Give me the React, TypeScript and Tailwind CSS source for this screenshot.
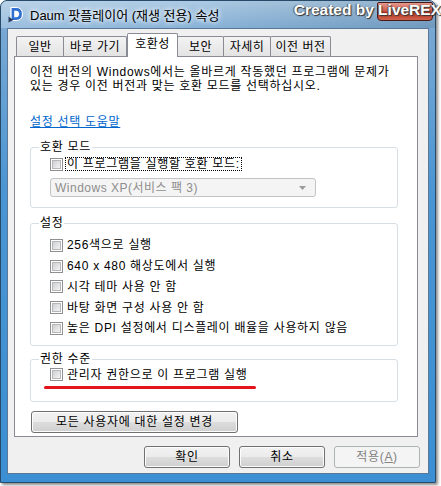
import React from "react";

const font = "font-[family-name:'Liberation_Sans','Noto_Sans_CJK_KR',sans-serif]";

const tabs = [
  { label: "일반", w: "w-[48px]" },
  { label: "바로 가기", w: "w-[64px]" },
  { label: "호환성", w: "w-[51px]", active: true },
  { label: "보안", w: "w-[47px]" },
  { label: "자세히", w: "w-[48px]" },
  { label: "이전 버전", w: "w-[61px]" },
];

const settings = [
  "256색으로 실행",
  "640 x 480 해상도에서 실행",
  "시각 테마 사용 안 함",
  "바탕 화면 구성 사용 안 함",
  "높은 DPI 설정에서 디스플레이 배율을 사용하지 않음",
];

const CheckBox = () => (
  <span className="flex w-[13px] h-[13px] shrink-0 border border-[#8e8f8f] bg-white p-[1px]">
    <span className="block w-full h-full border border-[#b5b7ba] bg-[linear-gradient(135deg,#cfd0d2,#f3f3f3)]" />
  </span>
);

const Group = ({ title, children, className }: { title: string; children: React.ReactNode; className?: string }) => (
  <fieldset className={`border border-[#d5dfe5] rounded-[3px] w-[368px] ${className ?? ""}`}>
    <legend className="ml-[8px] px-[1px] h-[13px] leading-[13px]">{title}</legend>
    {children}
  </fieldset>
);

const Button = ({ children, className }: { children: React.ReactNode; className?: string }) => (
  <div
    className={`flex items-center justify-center h-[22px] rounded-[3px] border border-[#707070] bg-[linear-gradient(#f2f2f2_0%,#ebebeb_50%,#dddddd_51%,#cfcfcf_100%)] shadow-[inset_0_0_0_1px_#fcfcfc] ${className ?? ""}`}
  >
    {children}
  </div>
);

const App = () => {
  return (
    <div className={`w-[441px] h-[486px] bg-white overflow-hidden ${font} text-[12px] leading-[12px] tracking-[0.7px] text-black`}>
      <div className="relative w-[436px] h-[483px] rounded-t-[7px] border border-[#274a6b] bg-[linear-gradient(180deg,#a3c4e0_0%,#78a8d3_6%,#4a95d3_40%,#3b8fd2_100%)] shadow-[2px_2px_3px_rgba(0,0,0,0.45)] flex flex-col">
        {/* title bar */}
        <div className="h-[27px] flex items-start bg-[linear-gradient(90deg,rgba(255,255,255,0.25),rgba(255,255,255,0.1)_45%,rgba(0,0,0,0.1))] rounded-t-[6px]">
          <svg width="16" height="17" viewBox="0 0 16 17" className="mt-[5px] ml-[7px]">
            <path d="M3 1.5h5.2c3.8 0 6.3 2.8 6.3 6.5s-2.5 6.5-6.3 6.5H3z" fill="#2f6fd0" stroke="#ffffff" strokeWidth="1.2" />
            <path d="M6.2 4.8h2c1.9 0 3 1.3 3 3.2s-1.1 3.2-3 3.2h-2z" fill="#ffffff" />
            <path d="M0.5 10.5l5 3.5-5 2.6z" fill="#2a3f62" />
          </svg>
          <span className="mt-[8px] ml-[6px] text-[13px] leading-[13px] tracking-[0px] text-black [text-shadow:0_0_6px_#fff,0_0_4px_#fff]">
            Daum 팟플레이어 (재생 전용) 속성
          </span>
          <div className="ml-auto mr-[2px] mt-[1px] w-[56px] h-[19px] rounded-b-[4px] rounded-t-[2px] border border-[#4a1a17] bg-[linear-gradient(#e59a8f_0%,#cf5a4a_45%,#b5301e_55%,#d0654f_100%)]" />
          <span className="absolute right-[-6px] top-[0px] font-bold tracking-normal text-[15.5px] leading-[18px] text-white [text-shadow:1px_1px_1px_#333,-1px_0_1px_#555]">
            Created by LiveREX
          </span>
        </div>

        {/* client area */}
        <div className="mx-[6px] w-[422px] h-[446px] border border-[#5b7897] bg-[#f0f0f0] flex flex-col">
          {/* tabs */}
          <div className="flex items-end pl-[8px] pt-[4px] relative z-10 tracking-[0.5px]">
            {tabs.map((t) =>
              t.active ? (
                <div
                  key={t.label}
                  className={`${t.w} h-[24px] -mb-px border border-b-0 border-[#898c95] bg-white flex justify-center pt-[4px] rounded-t-[2px]`}
                >
                  {t.label}
                </div>
              ) : (
                <div
                  key={t.label}
                  className={`${t.w} h-[20px] -ml-px first:ml-0 border border-b-0 border-[#898c95] bg-[linear-gradient(#f3f3f3,#e3e3e3)] flex justify-center pt-[4px] rounded-t-[2px]`}
                >
                  {t.label}
                </div>
              )
            )}
          </div>

          {/* panel */}
          <div className="ml-[6px] w-[404px] h-[381px] border border-[#898c95] bg-white pl-[15px] pt-[9px] flex flex-col">
            <p className="whitespace-nowrap leading-[13.5px]">
              이전 버전의 Windows에서는 올바르게 작동했던 프로그램에 문제가
              <br />
              있는 경우 이전 버전과 맞는 호환 모드를 선택하십시오.
            </p>
            <a className="mt-[23px] self-start text-[#0066cc] underline leading-[12px]">설정 선택 도움말</a>

            <Group title="호환 모드" className="mt-[13px] pb-[10px]">
              <div className="flex items-center h-[14px] mt-[3px] ml-[19px]">
                <CheckBox />
                <span className="ml-[2px] px-[1px] h-[14px] flex items-center border border-dotted border-black">
                  이 프로그램을 실행할 호환 모드:
                </span>
              </div>
              <div className="mt-[7px] ml-[19px] w-[266px] h-[19px] rounded-[3px] border border-[#c3c3c3] bg-[#f4f4f4] flex items-center pl-[4px] pr-[9px] text-[#8d8d8d] tracking-[0.5px]">
                <span>Windows XP(서비스 팩 3)</span>
                <svg width="7" height="4" viewBox="0 0 7 4" className="ml-auto">
                  <path d="M0 0h7L3.5 4z" fill="#9a9a9a" />
                </svg>
              </div>
            </Group>

            <Group title="설정" className="mt-[9px] pt-[5px] pb-[6px]">
              {settings.map((s) => (
                <div key={s} className="flex items-center h-[20.75px] ml-[19px]">
                  <CheckBox />
                  <span className="ml-[4px]">{s}</span>
                </div>
              ))}
            </Group>

            <Group title="권한 수준" className="mt-[7px] pb-[12px]">
              <div className="flex items-center h-[14px] mt-[2px] ml-[19px]">
                <CheckBox />
                <span className="ml-[4px]">관리자 권한으로 이 프로그램 실행</span>
              </div>
              <div className="mt-[4px] ml-[13px] w-[212px] h-[3px] rounded-full bg-[#e5141b]" />
            </Group>

            <Button className="mt-[9px] w-[207px] ml-[1px]">모든 사용자에 대한 설정 변경</Button>
          </div>

          {/* bottom buttons */}
          <div className="flex justify-end gap-[9px] mt-[9px] pr-[8px]">
            <Button className="w-[86px] border-[#3c7fb1] shadow-[inset_0_0_0_1px_#bfe6fa]">확인</Button>
            <Button className="w-[86px]">취소</Button>
            <div className="w-[86px] h-[22px] rounded-[3px] border border-[#adb2b5] bg-[#f4f4f4] flex items-center justify-center text-[#838383]">
              적용(<span className="underline">A</span>)
            </div>
          </div>
        </div>
      </div>
    </div>
  );
};

export default App;
